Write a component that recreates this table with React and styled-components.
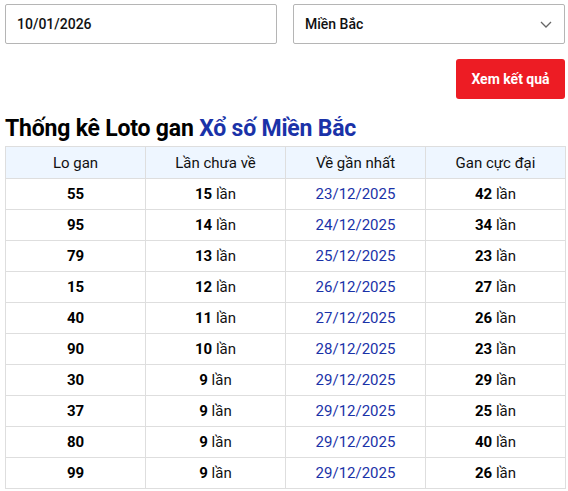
import React from "react";
import styled, { createGlobalStyle } from "styled-components";

const rows = [
    ["55", 15, "23/12/2025", 42],
    ["95", 14, "24/12/2025", 34],
    ["79", 13, "25/12/2025", 23],
    ["15", 12, "26/12/2025", 27],
    ["40", 11, "27/12/2025", 26],
    ["90", 10, "28/12/2025", 23],
    ["30", 9, "29/12/2025", 29],
    ["37", 9, "29/12/2025", 25],
    ["80", 9, "29/12/2025", 40],
    ["99", 9, "29/12/2025", 26],
];

export default function App() {
    return (
        <Page>
            <GlobalStyle />
            <FormRow>
                <Field>10/01/2026</Field>
                <Field>
                    Miền Bắc
                    <svg width="12" height="7" viewBox="0 0 12 7" fill="none">
                        <path d="M1 1l5 5 5-5" stroke="#666" strokeWidth="1.3" />
                    </svg>
                </Field>
            </FormRow>
            <Actions>
                <SubmitButton>Xem kết quả</SubmitButton>
            </Actions>
            <Title>
                Thống kê Loto gan <Accent>Xổ số Miền Bắc</Accent>
            </Title>
            <Table>
                <thead>
                    <tr>
                        <Th>Lo gan</Th>
                        <Th>Lần chưa về</Th>
                        <Th>Về gần nhất</Th>
                        <Th>Gan cực đại</Th>
                    </tr>
                </thead>
                <tbody>
                    {rows.map(([num, miss, date, max]) => (
                        <tr key={num}>
                            <Td>
                                <b>{num}</b>
                            </Td>
                            <Td>
                                <b>{miss}</b> lần
                            </Td>
                            <Td $blue>{date}</Td>
                            <Td>
                                <b>{max}</b> lần
                            </Td>
                        </tr>
                    ))}
                </tbody>
            </Table>
        </Page>
    );
}

const GlobalStyle = createGlobalStyle`
    body {
        margin: 0;
        background: #fff;
        font-family: Roboto, "Liberation Sans", sans-serif;
        color: #111;
    }
`;

const Page = styled.div`
    padding: 4px 3px 0 5px;
`;

const FormRow = styled.div`
    display: grid;
    grid-template-columns: 272px 272px;
    justify-content: space-between;
`;

const Field = styled.div`
    height: 40px;
    box-sizing: border-box;
    border: 1px solid #b5b5b5;
    border-radius: 2px;
    display: flex;
    align-items: center;
    justify-content: space-between;
    padding: 0 12px 0 11px;
    font-size: 14px;
    font-weight: 500;
    color: #111;
`;

const Actions = styled.div`
    display: flex;
    justify-content: flex-end;
    margin-top: 15px;
`;

const SubmitButton = styled.button`
    width: 109px;
    height: 40px;
    border: none;
    border-radius: 3px;
    background: #ed1c24;
    color: #fff;
    font-family: Roboto, "Liberation Sans", sans-serif;
    font-weight: 700;
    font-size: 14px;
    padding: 0;
`;

const Title = styled.h2`
    margin: 15px 0 0 0;
    font-size: 23px;
    line-height: 30px;
    font-weight: 700;
    color: #000;
    letter-spacing: -0.2px;
`;

const Accent = styled.span`
    color: #1a32a8;
`;

const Table = styled.table`
    width: 561px;
    border-collapse: collapse;
    table-layout: fixed;
    font-size: 15px;
    margin-top: 2px;
`;

const Th = styled.th`
    height: 31px;
    padding: 0;
    border: 1px solid #dedede;
    background: #eef6ff;
    font-weight: 400;
    color: #111;
`;

const Td = styled.td`
    height: 30px;
    padding: 0;
    border: 1px solid #dedede;
    text-align: center;
    color: ${({ $blue }) => ($blue ? "#1a32a8" : "#111")};

    b {
        font-weight: 700;
        color: #000;
    }
`;
